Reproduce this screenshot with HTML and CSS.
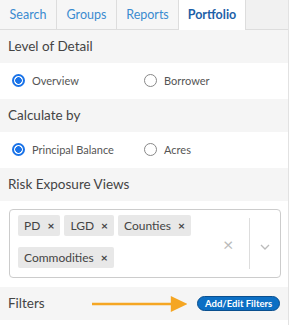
FILE: index.html
```html
<!DOCTYPE html>
<html>
<head>
    <title>Portfolio</title>
    <link rel="stylesheet" href="styles.css">
</head>
<body>
    <div class="panel">
        <div class="tabs">
            <div class="tab search">Search</div>
            <div class="tab groups">Groups</div>
            <div class="tab reports">Reports</div>
            <div class="tab active">Portfolio</div>
        </div>

        <div class="section-title">Level of Detail</div>
        <div class="radio-row">
            <label class="radio checked"><span class="dot"></span>Overview</label>
            <label class="radio"><span class="dot"></span>Borrower</label>
        </div>

        <div class="section-title">Calculate by</div>
        <div class="radio-row">
            <label class="radio checked"><span class="dot"></span>Principal Balance</label>
            <label class="radio"><span class="dot"></span>Acres</label>
        </div>

        <div class="section-title">Risk Exposure Views</div>
        <div class="select-wrap">
            <div class="select">
                <div class="tags">
                    <span class="tag">PD <b>&times;</b></span>
                    <span class="tag">LGD <b>&times;</b></span>
                    <span class="tag">Counties <b>&times;</b></span>
                    <span class="tag">Commodities <b>&times;</b></span>
                </div>
                <div class="clear">&times;</div>
                <div class="sep"></div>
                <div class="chevron">
                    <svg width="10" height="6" viewBox="0 0 10 6"><path d="M1 1l4 4 4-4" fill="none" stroke="#bbb" stroke-width="1.3"/></svg>
                </div>
            </div>
        </div>

        <div class="section-title filters">
            <span>Filters</span>
            <svg class="arrow" width="97" height="16" viewBox="0 0 97 16"><path d="M0 8h82" stroke="#f5a623" stroke-width="2.5"/><path d="M80 0l17 8-17 8z" fill="#f5a623"/></svg>
            <button class="btn">Add/Edit Filters</button>
        </div>
        <div class="bottom"></div>
    </div>
</body>
</html>
```

FILE: styles.css
```css
body {
    margin: 0;
    font-family: Lato, "Noto Sans", sans-serif;
    background-color: #fff;
}
.panel {
    width: 288px;
    border-right: 1px solid #e2e2e2;
}
.tabs {
    display: flex;
    height: 29px;
    background-color: #f1f1f1;
    border-bottom: 1px solid #ddd;
}
.tab {
    line-height: 29px;
    font-size: 12.5px;
    color: #3a8bd0;
    border-right: 1px solid #ddd;
    background-color: #f6f6f6;
    text-align: center;
    box-sizing: border-box;
}
.search {
    width: 57px;
}
.groups {
    width: 60px;
}
.reports {
    width: 62px;
}
.tab.active {
    width: 67px;
    background-color: #fff;
    color: #1d5fa8;
    font-weight: bold;
    height: 30px;
}
.section-title {
    background-color: #f5f5f5;
    color: #444;
    font-size: 13.5px;
    height: 33px;
    line-height: 33px;
    padding: 0 8px;
}
.radio-row {
    display: flex;
    height: 36px;
    box-sizing: border-box;
    align-items: center;
    padding: 0 12px 2px;
    font-size: 11px;
    color: #555;
}
.radio {
    display: flex;
    align-items: center;
    width: 134px;
}
.dot {
    width: 13px;
    height: 13px;
    border: 1px solid #888;
    border-radius: 50%;
    margin-right: 7px;
    box-sizing: border-box;
}
.radio.checked .dot {
    border: 2px solid #1a73e8;
    background: radial-gradient(circle, #1a73e8 0, #1a73e8 3px, #fff 3.6px);
}
.select-wrap {
    padding: 8px 7px 9px 9px;
}
.select {
    display: flex;
    align-items: center;
    border: 1px solid #ccc;
    border-radius: 4px;
    min-height: 69px;
    box-sizing: border-box;
}
.tags {
    flex: 1;
    display: flex;
    flex-wrap: wrap;
    gap: 11px 4px;
    padding: 2px 8px 6px;
}
.tag {
    background-color: #e8e8e8;
    border-radius: 2px;
    padding: 0 6px;
    height: 21px;
    line-height: 21px;
    font-size: 12px;
    color: #444;
}
.tag b {
    margin-left: 4px;
    font-size: 12px;
}
.clear {
    color: #bbb;
    font-size: 18px;
    width: 26px;
}
.sep {
    width: 1px;
    align-self: stretch;
    margin: 8px 0;
    background-color: #ddd;
}
.chevron {
    width: 30px;
    text-align: center;
}
.filters {
    display: flex;
    align-items: center;
}
.filters span {
    width: 85px;
}
.arrow {
    margin-right: 10px;
}
.btn {
    background-color: #0c6fc4;
    border: 1px solid #0a4f8e;
    color: #fff;
    font-family: inherit;
    font-weight: bold;
    font-size: 9.5px;
    white-space: nowrap;
    border-radius: 8px;
    width: 84px;
    height: 15px;
    padding: 0;
    line-height: 12px;
}
.bottom {
    height: 10px;
}
```
